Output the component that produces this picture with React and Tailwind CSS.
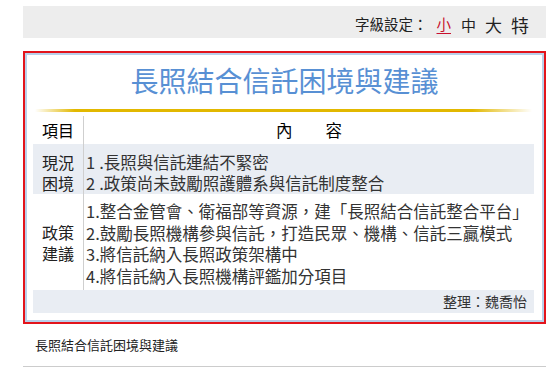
import React from 'react';

const cjk = { fontFamily: '"Noto Sans CJK TC", "Noto Sans", sans-serif' };

const rowOne = ['長照與信託連結不緊密', '政策尚未鼓勵照護體系與信託制度整合'];

const rowTwo = [
  '整合金管會、衛福部等資源，建「長照結合信託整合平台」',
  '鼓勵長照機構參與信託，打造民眾、機構、信託三贏模式',
  '將信託納入長照政策架構中',
  '將信託納入長照機構評鑑加分項目',
];

function App() {
  return (
    <div className="w-[558px] h-[370px] bg-white overflow-hidden text-[#222]" style={cjk}>
      <div className="ml-[23px] w-[523px] pt-[6px]">
        {/* font size bar */}
        <div className="h-[32px] bg-[#ededed] flex items-center justify-end pr-[17px] pt-[5px] text-[14.5px] leading-none">
          <span>字級設定：</span>
          <span className="ml-[9px] text-[#c8102e] underline underline-offset-[3px]">小</span>
          <span className="ml-[10px] text-[15px]">中</span>
          <span className="ml-[9px] text-[17px]">大</span>
          <span className="ml-[9px] text-[18px]">特</span>
        </div>

        {/* infographic */}
        <div className="mt-[13px] border-2 border-[#e3141c]">
          <div className="border-2 border-[#b9d0ea] bg-white h-[269px] flex flex-col">
            <h1 className="pt-[8px] text-center text-[28px] leading-[34px] text-[#5890d4]">
              長照結合信託困境與建議
            </h1>
            <div className="mt-[12px] ml-[8px] mr-[10px] h-[3px] bg-[linear-gradient(to_right,rgba(224,180,0,0),#e2b800_8%,#e2b800_88%,rgba(224,180,0,0))]" />

            <div className="mt-[1px] ml-[6px] mr-[8px] text-[16.5px]">
              <div className="flex h-[31px] pt-[3px] items-center text-black">
                <div className="w-[51px] h-full flex items-center justify-center border-r border-[#cfcfcf] text-[16px]">項目</div>
                <div className="flex-1 text-center">內　　容</div>
              </div>

              <div className="flex bg-[#e9edf3] h-[50px]">
                <div className="w-[51px] border-r border-[#cfcfcf] pt-[8px] text-center text-[16px] leading-[20.5px]">
                  <div>現況</div>
                  <div>困境</div>
                </div>
                <div className="pl-[2px] pt-[8px] leading-[20.5px] text-[#333]">
                  {rowOne.map((t, i) => (
                    <div key={i} className="whitespace-nowrap">
                      <span className="tracking-[4px]">{i + 1}</span>.{t}
                    </div>
                  ))}
                </div>
              </div>

              <div className="flex h-[96px]">
                <div className="w-[51px] border-r border-[#cfcfcf] flex flex-col justify-center text-center text-[16px] leading-[21px] pt-[2px]">
                  <div>政策</div>
                  <div>建議</div>
                </div>
                <div className="pl-[2px] pt-[7px] leading-[21.5px] text-[#333]">
                  {rowTwo.map((t, i) => (
                    <div key={i} className="whitespace-nowrap">
                      {i + 1}.{t}
                    </div>
                  ))}
                </div>
              </div>

              <div className="h-[23px] bg-[#e9edf3] flex items-center justify-end pr-[7px] text-[14px] text-[#333]">
                整理：魏喬怡
              </div>
            </div>
          </div>
        </div>

        <p className="mt-[12px] ml-[12px] text-[13px] leading-[18px] text-[#222]">長照結合信託困境與建議</p>
        <div className="mt-[12px] h-px bg-[#cccccc]" />
      </div>
    </div>
  );
}

export default App;
